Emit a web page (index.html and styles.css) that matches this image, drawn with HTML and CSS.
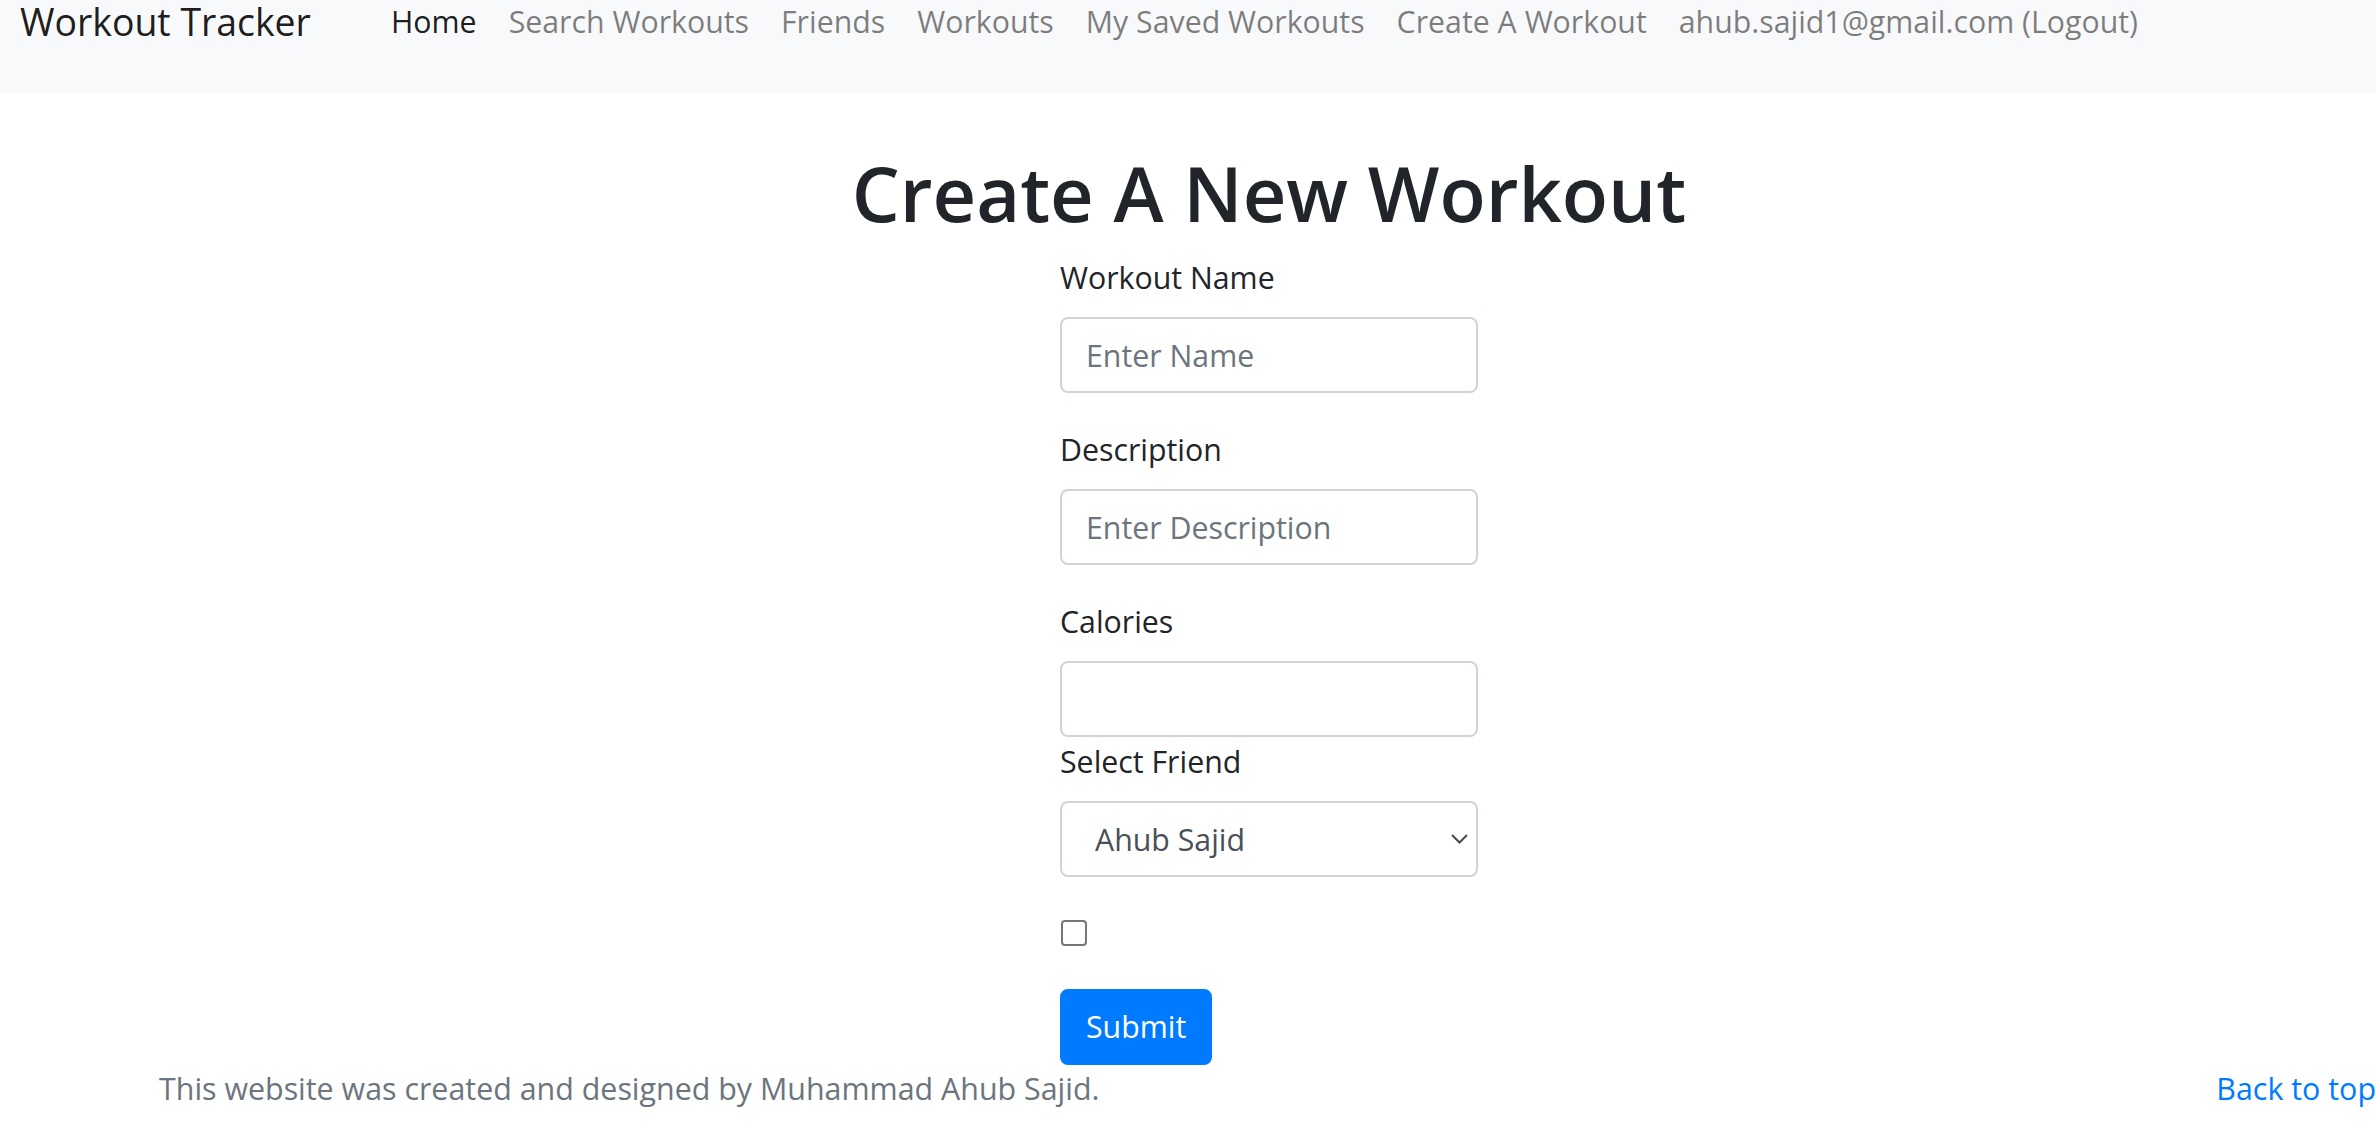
FILE: index.html
```html
<!DOCTYPE html>
<html lang="en">
<head>
<meta charset="utf-8">
<title>Workout Tracker</title>
<link rel="stylesheet" href="styles.css">
</head>
<body>
<nav class="navbar">
  <a class="brand" href="#">Workout Tracker</a>
  <ul class="nav">
    <li><a class="nav-link active" href="#">Home</a></li>
    <li><a class="nav-link" href="#">Search Workouts</a></li>
    <li><a class="nav-link" href="#">Friends</a></li>
    <li><a class="nav-link" href="#">Workouts</a></li>
    <li><a class="nav-link" href="#">My Saved Workouts</a></li>
    <li><a class="nav-link" href="#">Create A Workout</a></li>
    <li><a class="nav-link" href="#">ahub.sajid1@gmail.com (Logout)</a></li>
  </ul>
</nav>
<main class="page">
  <h1 class="title">Create A New Workout</h1>
  <form class="form">
    <div class="group">
      <label class="label" for="wname">Workout Name</label>
      <input class="control" id="wname" type="text" placeholder="Enter Name">
    </div>
    <div class="group">
      <label class="label" for="wdesc">Description</label>
      <input class="control" id="wdesc" type="text" placeholder="Enter Description">
    </div>
    <label class="label" for="wcal">Calories</label>
    <input class="control" id="wcal" type="text">
    <label class="label" for="wfriend">Select Friend</label>
    <div class="group select-wrap">
      <select class="control select" id="wfriend">
        <option>Ahub Sajid</option>
      </select>
      <svg class="chevron" viewBox="0 0 17 10" aria-hidden="true"><path d="M1 1 L8.5 8.5 L16 1" fill="none" stroke="#4a4a4a" stroke-width="2"/></svg>
    </div>
    <div class="group check">
      <input class="checkbox" type="checkbox">
    </div>
    <button class="btn" type="button">Submit</button>
  </form>
</main>
<footer class="footer">
  <p class="credit">This website was created and designed by Muhammad Ahub Sajid.</p>
  <a class="back" href="#">Back to top</a>
</footer>
</body>
</html>
```
FILE: styles.css
```css
* { box-sizing: border-box; }
html, body { margin: 0; }
body {
  font-family: "Open Sans", "Noto Sans", sans-serif;
  color: #212529;
  background: #fff;
  overflow-x: hidden;
}

.navbar {
  display: flex;
  align-items: flex-start;
  height: 93px;
  background: #f8f9fa;
  padding-left: 20px;
}
.brand {
  flex: 0 0 371px;
  font-size: 37.4px;
  line-height: 40px;
  padding-top: 2px;
  color: rgba(0, 0, 0, .9);
  text-decoration: none;
  white-space: nowrap;
}
.nav {
  display: flex;
  gap: 32px;
  list-style: none;
  margin: 0;
  padding: 2px 0 0;
}
.nav-link {
  font-size: 30.3px;
  line-height: 40px;
  color: rgba(0, 0, 0, .5);
  text-decoration: none;
  white-space: nowrap;
}
.nav-link.active { color: rgba(0, 0, 0, .9); }

.page {
  display: flex;
  flex-direction: column;
  align-items: center;
  padding: 52px 0 0 162px;
}
.title {
  margin: 0 0 12px;
  font-size: 75.8px;
  font-weight: 600;
  line-height: 96px;
  white-space: nowrap;
}
.form {
  width: 418px;
  display: flex;
  flex-direction: column;
}
.group {
  display: flex;
  flex-direction: column;
  margin-bottom: 32px;
}
.label {
  font-size: 30.3px;
  line-height: 48px;
  padding-top: 1px;
  margin-bottom: 15px;
}
.control {
  height: 76px;
  width: 100%;
  margin: 0;
  border: 2px solid #ced4da;
  border-radius: 8px;
  padding: 0 24px;
  font-family: inherit;
  font-size: 30.3px;
  color: #495057;
  background: #fff;
  outline: none;
}
.control::placeholder { color: #6c757d; opacity: 1; }

.select-wrap { position: relative; }
.select {
  appearance: none;
  -webkit-appearance: none;
  padding-left: 33px;
}
.chevron {
  position: absolute;
  right: 10px;
  top: 33px;
  width: 17px;
  height: 10px;
  pointer-events: none;
}

.check {
  height: 48px;
  justify-content: center;
}
.checkbox {
  appearance: none;
  -webkit-appearance: none;
  width: 26px;
  height: 26px;
  margin: 0 0 0 1px;
  border: 2px solid #767676;
  border-radius: 4px;
  background: #fff;
}

.btn {
  align-self: flex-start;
  height: 76px;
  padding: 12px 24px;
  font-family: inherit;
  font-size: 30.3px;
  line-height: 48px;
  color: #fff;
  background: #007bff;
  border: 2px solid #007bff;
  border-radius: 8px;
}

.footer {
  display: flex;
  justify-content: space-between;
  padding-left: 159px;
  font-size: 30.4px;
  line-height: 48px;
  color: #6c757d;
}
.credit { margin: 0; white-space: nowrap; }
.back {
  color: #007bff;
  text-decoration: none;
  white-space: nowrap;
}
```
